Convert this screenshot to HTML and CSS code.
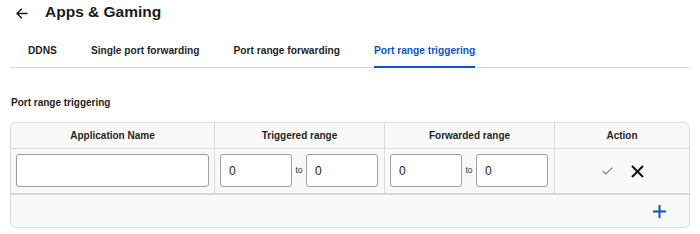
FILE: index.html
```html
<!DOCTYPE html>
<html lang="en">
<head>
<meta charset="utf-8">
<title>Apps &amp; Gaming</title>
<link rel="stylesheet" href="styles.css">
</head>
<body>
<header class="page-head">
  <svg class="back" width="12" height="11" viewBox="0 0 12 11" aria-hidden="true">
    <path d="M11.5 5.5H1M5.8 0.7L1 5.5l4.8 4.8" fill="none" stroke="#1a1a1a" stroke-width="1.5"/>
  </svg>
  <h1 class="title">Apps &amp; Gaming</h1>
</header>
<nav class="tabs">
  <span class="tab">DDNS</span>
  <span class="tab">Single port forwarding</span>
  <span class="tab">Port range forwarding</span>
  <span class="tab active">Port range triggering</span>
</nav>
<h2 class="section-label">Port range triggering</h2>
<div class="table">
  <div class="cell head">Application Name</div>
  <div class="cell head divider">Triggered range</div>
  <div class="cell head divider">Forwarded range</div>
  <div class="cell head divider">Action</div>

  <div class="cell body"><input class="field wide" type="text" value=""></div>
  <div class="cell body divider range">
    <input class="field num" type="text" value="0"><span class="to">to</span><input class="field num" type="text" value="0">
  </div>
  <div class="cell body divider range">
    <input class="field num" type="text" value="0"><span class="to">to</span><input class="field num" type="text" value="0">
  </div>
  <div class="cell body divider actions">
    <svg width="11" height="8" viewBox="0 0 11 8" aria-hidden="true"><path d="M0.6 3.8l3.1 3.1L10.4 0.6" fill="none" stroke="#808080" stroke-width="1.2"/></svg>
    <svg width="13" height="13" viewBox="0 0 13 13" aria-hidden="true"><path d="M1 1l11 11M12 1L1 12" fill="none" stroke="#111" stroke-width="2"/></svg>
  </div>

  <div class="foot">
    <svg width="13" height="13" viewBox="0 0 13 13" aria-hidden="true"><path d="M6.5 0v13M0 6.5h13" fill="none" stroke="#0a55c4" stroke-width="2"/></svg>
  </div>
</div>
</body>
</html>
```
FILE: styles.css
```css
* { box-sizing: border-box; }
html, body { margin: 0; padding: 0; background: #fff; }
body {
  font-family: "Liberation Sans", Arial, sans-serif;
  color: #1a1a1a;
  width: 700px;
}
.page-head {
  display: flex;
  align-items: center;
  height: 24px;
  padding-left: 16px;
}
.back { display: block; margin-top: 2px; }
.title {
  margin: 0 0 0 17px;
  font-size: 15.5px;
  font-weight: 700;
  line-height: 24px;
  color: #1a1a1a;
}
.tabs {
  display: flex;
  gap: 34px;
  margin: 0 11px 0 10px;
  padding-left: 18px;
  border-bottom: 1px solid #d9d9db;
}
.tab {
  font-size: 10.2px;
  font-weight: 700;
  line-height: 13px;
  padding: 20px 0 9px;
  margin-bottom: -1px;
  border-bottom: 2px solid transparent;
  color: #1f1f1f;
  white-space: nowrap;
}
.tab.active {
  color: #0a55c4;
  border-bottom-color: #0a55c4;
}
.section-label {
  margin: 28px 0 13px;
  padding-left: 11px;
  font-size: 10px;
  font-weight: 700;
  line-height: 13px;
  color: #1f1f1f;
}
.table {
  margin-left: 10px;
  width: 680px;
  border: 1px solid #dcdcdf;
  border-radius: 6px;
  background: #f9f9fa;
  display: grid;
  grid-template-columns: 203px 170px 170px 135px;
  overflow: hidden;
}
.cell.divider { border-left: 1px solid #dcdcdf; }
.cell.head {
  height: 26px;
  border-bottom: 1px solid #dcdcdf;
  display: flex;
  align-items: center;
  justify-content: center;
  font-size: 10px;
  font-weight: 700;
  color: #1f1f1f;
}
.cell.body {
  height: 46px;
  border-bottom: 2px solid #d6d6da;
  padding: 5px;
  display: flex;
  align-items: flex-start;
}
.cell.range {
  justify-content: center;
  padding: 5px 6px 5px 5px;
}
.field {
  height: 33px;
  border: 1px solid #9e9e9e;
  border-radius: 3px;
  background: #fff;
  font-family: "Liberation Sans", Arial, sans-serif;
  font-size: 12px;
  color: #222;
  padding: 0 8px;
  margin: 0;
  outline: none;
}
.field.wide { width: 193px; }
.field.num { width: 72px; }
.to {
  width: 14px;
  text-align: center;
  font-size: 8.5px;
  color: #333;
  line-height: 33px;
}
.cell.actions {
  justify-content: center;
  align-items: center;
  gap: 18px;
  padding: 0 0 0 2px;
}
.cell.actions svg { display: block; }
.foot {
  grid-column: 1 / -1;
  height: 32px;
  display: flex;
  align-items: center;
  justify-content: flex-end;
  padding-right: 23px;
}
.foot svg { display: block; margin-top: 1px; }
```
